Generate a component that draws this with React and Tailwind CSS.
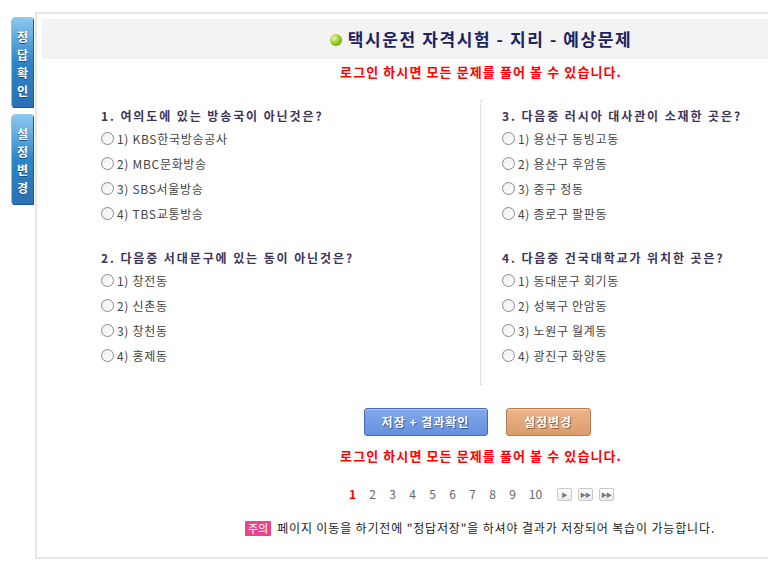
import { Fragment } from 'react'

const FONT = { fontFamily: "'Noto Sans CJK KR', 'Noto Sans', sans-serif" }

const LEFT = [
  {
    q: '1. 여의도에 있는 방송국이 아닌것은?',
    opts: ['1) KBS한국방송공사', '2) MBC문화방송', '3) SBS서울방송', '4) TBS교통방송'],
  },
  {
    q: '2. 다음중 서대문구에 있는 동이 아닌것은?',
    opts: ['1) 창전동', '2) 신촌동', '3) 창천동', '4) 홍제동'],
  },
]

const RIGHT = [
  {
    q: '3. 다음중 러시아 대사관이 소재한 곳은?',
    opts: ['1) 용산구 동빙고동', '2) 용산구 후암동', '3) 중구 정동', '4) 종로구 팔판동'],
  },
  {
    q: '4. 다음중 건국대학교가 위치한 곳은?',
    opts: ['1) 동대문구 회기동', '2) 성북구 안암동', '3) 노원구 월계동', '4) 광진구 화양동'],
  },
]

// 세로 탭 (정답확인 / 설정변경)
function SideTab({ chars }) {
  return (
    <div className="w-[22px] h-[90px] rounded-tl-[5px] rounded-bl-[2px] rounded-tr-[2px] border-l border-[#8cc4ea] bg-gradient-to-b from-[#8ccaf0] via-[#2c86c9] to-[#2a70b4] flex flex-col items-center pt-[11px] gap-[1px] shadow-[1px_1px_0_#1d5a95]">
      {chars.map((c) => (
        <span key={c} className="text-white font-bold text-[12px] leading-[17px] [text-shadow:0_1px_0_#1a4f85]">
          {c}
        </span>
      ))}
    </div>
  )
}

function Radio() {
  return (
    <span className="inline-block w-[13px] h-[13px] rounded-full border border-[#8a8a8a] bg-gradient-to-br from-[#eeeeee] to-white mr-[3px] shrink-0" />
  )
}

function Question({ item, first }) {
  return (
    <div className={first ? '' : 'mt-[22px]'}>
      <div className="h-[20px] flex items-center text-[12px] font-bold text-[#3d3458] tracking-[1.9px]">
        {item.q}
      </div>
      {item.opts.map((o) => (
        <div key={o} className="h-[25px] flex items-center text-[12px] text-[#444] tracking-[0.7px]">
          <Radio />
          <span>{o}</span>
        </div>
      ))}
    </div>
  )
}

function RedNotice() {
  return (
    <div className="text-center text-[13px] font-bold text-[#ff0000] tracking-[1.1px] leading-[18px]">
      로그인 하시면 모든 문제를 풀어 볼 수 있습니다.
    </div>
  )
}

function PageBtn({ children }) {
  return (
    <span className="w-[15px] h-[13px] rounded-[2px] border border-[#c8c8c8] bg-gradient-to-b from-white to-[#eaeaea] flex items-center justify-center text-[6px] text-[#777] tracking-[-1px]">
      {children}
    </span>
  )
}

export default function App() {
  return (
    <div className="flex bg-white min-h-[561px]" style={FONT}>
      {/* 좌측 탭 */}
      <div className="w-[35px] shrink-0 pl-[11px] pt-[17px] flex flex-col gap-[7px]">
        <SideTab chars={['정', '답', '확', '인']} />
        <SideTab chars={['설', '정', '변', '경']} />
      </div>

      <div className="mt-[12px] w-[892px] shrink-0 border-2 border-[#e6e6e6] p-[5px] h-[547px]">
        {/* 제목 */}
        <div className="h-[40px] bg-[#f3f3f3] flex items-center justify-center">
          <span className="w-[12px] h-[12px] rounded-full bg-[radial-gradient(circle_at_35%_35%,#e6f7a0,#8fc21f_55%,#4f8a0a)] mr-[6px] mt-[1px]" />
          <span className="text-[17px] font-bold text-[#1c2262] tracking-[1.6px]">
            택시운전 자격시험 - 지리 - 예상문제
          </span>
        </div>

        <div className="mt-[4px]">
          <RedNotice />
        </div>

        {/* 문제 */}
        <div className="mx-auto w-[760px] flex mt-[19px]">
          <div className="w-[379px] pt-[6px] pb-[17px]">
            {LEFT.map((item, i) => (
              <Question key={item.q} item={item} first={i === 0} />
            ))}
          </div>
          <div className="flex-1 border-l border-dotted border-[#c8c8c8] pl-[21px] pt-[6px] pb-[17px]">
            {RIGHT.map((item, i) => (
              <Question key={item.q} item={item} first={i === 0} />
            ))}
          </div>
        </div>

        {/* 버튼 */}
        <div className="flex justify-center gap-[18px] mt-[23px] pr-[8px]">
          <button className="w-[124px] h-[28px] rounded-[3px] border border-[#4568b8] bg-gradient-to-b from-[#84a8ea] to-[#6690df] text-white font-bold text-[12px] tracking-[1px] [text-shadow:1px_1px_0_#39579a] shadow-[inset_0_1px_0_#a8c2f2]">
            저장 + 결과확인
          </button>
          <button className="w-[85px] h-[28px] rounded-[3px] border border-[#b77a4a] bg-gradient-to-b from-[#ebb488] to-[#dc9c6c] text-white font-bold text-[12px] tracking-[1px] [text-shadow:1px_1px_0_#9a6438] shadow-[inset_0_1px_0_#f3ccaa]">
            설정변경
          </button>
        </div>

        <div className="mt-[11px]">
          <RedNotice />
        </div>

        {/* 페이지 */}
        <div className="flex items-center justify-center mt-[21px] h-[16px] text-[12px] text-[#666] pr-[6px]">
          <span className="font-bold text-[#ff0000] w-[20px] text-center">1</span>
          {[2, 3, 4, 5, 6, 7, 8, 9].map((n) => (
            <span key={n} className="w-[20px] text-center">{n}</span>
          ))}
          <span className="w-[26px] text-center">10</span>
          <span className="flex gap-[6px] ml-[8px]">
            <PageBtn>▶</PageBtn>
            <PageBtn>▶▶</PageBtn>
            <PageBtn>▶▶</PageBtn>
          </span>
        </div>

        {/* 주의 */}
        <div className="flex items-center justify-center mt-[17px] text-[12px] text-[#222] pr-[2px]">
          <span className="bg-[#e8458c] text-white px-[3px] h-[15px] leading-[15px] text-[11px] rounded-[1px] mr-[6px]">주의</span>
          <span className="tracking-[0.85px]">페이지 이동을 하기전에 "정답저장"을 하셔야 결과가 저장되어 복습이 가능합니다.</span>
        </div>
      </div>
    </div>
  )
}
